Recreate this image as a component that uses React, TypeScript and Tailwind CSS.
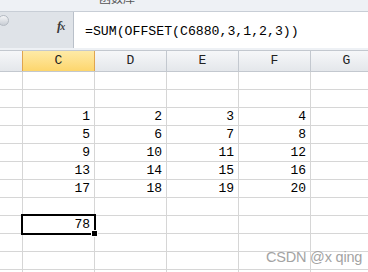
const cols = ["C", "D", "E", "F", "G"];

const rows: (string | number)[][] = [
  [],
  [],
  [1, 2, 3, 4],
  [5, 6, 7, 8],
  [9, 10, 11, 12],
  [13, 14, 15, 16],
  [17, 18, 19, 20],
  [],
  [78],
  [],
  [],
  [],
];

const mono = { fontFamily: '"Liberation Mono", "Noto Sans CJK SC", monospace' };

const FormulaBar = () => {
  return (
    <div className="flex h-[36px] bg-[#dfe3e8]">
      <div className="relative w-[73px] shrink-0">
        <div className="absolute left-[-2px] top-[3px] h-[11px] w-[11px] rounded-full bg-gradient-to-b from-[#f4f5f7] to-[#c9ced5] border border-[#b4bac2]" />
        <span
          className="absolute left-[57px] top-[4px] text-[13px] italic font-bold text-[#3b3b3b] tracking-[-1px]"
          style={{ fontFamily: '"Liberation Serif", serif' }}
        >
          f<span className="text-[10px]">x</span>
        </span>
      </div>
      <div className="flex-1 bg-white border-l border-[#b9c0c9] pl-[11px] pt-[5px]">
        <span className="text-[13.2px] leading-[16px] text-black" style={mono}>
          =SUM(OFFSET(C6880,3,1,2,3))
        </span>
      </div>
    </div>
  );
};

const HeaderRow = () => {
  return (
    <div className="flex h-[22px] border-t border-b border-[#c3c8cf]">
      <div className="w-[23px] shrink-0 bg-gradient-to-b from-[#f6f7f9] to-[#e4e7eb] border-r border-[#c3c8cf]" />
      {cols.map((c) => (
        <div
          key={c}
          className={
            c === "C"
              ? "w-[73px] shrink-0 flex items-center justify-center bg-gradient-to-b from-[#feeaa6] to-[#fdd66c] border-l border-r border-[#e0a54f] -ml-px"
              : "w-[72px] shrink-0 flex items-center justify-center bg-gradient-to-b from-[#f6f7f9] to-[#e4e7eb] border-r border-[#c3c8cf]"
          }
        >
          <span className="text-[13px] text-[#222]" style={mono}>
            {c}
          </span>
        </div>
      ))}
    </div>
  );
};

const App = () => {
  return (
    <div className="relative w-[368px] h-[272px] overflow-hidden bg-white">
      <div className="h-[12px] bg-[#eef1f5] border-b border-[#c8ced6] overflow-hidden">
        <div
          className="pl-[99px] -mt-[9px] text-[12px] leading-[14px] text-[#555]"
          style={{ fontFamily: '"Noto Sans CJK SC", sans-serif' }}
        >
          函数库
        </div>
      </div>
      <FormulaBar />
      <div className="h-[2px] bg-[#eef1f5]" />
      <HeaderRow />
      {rows.map((r, i) => (
        <div key={i} className="flex h-[18px] border-b border-[#d6d6d6]">
          <div className="w-[23px] shrink-0 border-r border-[#d6d6d6]" />
          {cols.map((c, j) => (
            <div
              key={c}
              className="relative w-[72px] shrink-0 border-r border-[#d6d6d6] flex items-end justify-end pr-[4px]"
            >
              <span className="text-[13px] leading-[16px] text-black" style={mono}>
                {r[j] ?? ""}
              </span>
              {i === 8 && j === 0 && (
                <>
                  <div className="absolute left-[-2px] top-[-2px] w-[75px] h-[21px] border-2 border-black" />
                  <div className="absolute z-10 right-[-4px] bottom-[-4px] w-[7px] h-[7px] bg-black border border-white" />
                </>
              )}
            </div>
          ))}
        </div>
      ))}
      <div
        className="absolute left-[266px] top-[247px] text-[14.5px] text-[#a3a3a3] tracking-[-0.2px]"
        style={{ fontFamily: '"Liberation Sans", sans-serif' }}
      >
        CSDN @x qing
      </div>
    </div>
  );
};

export default App;
